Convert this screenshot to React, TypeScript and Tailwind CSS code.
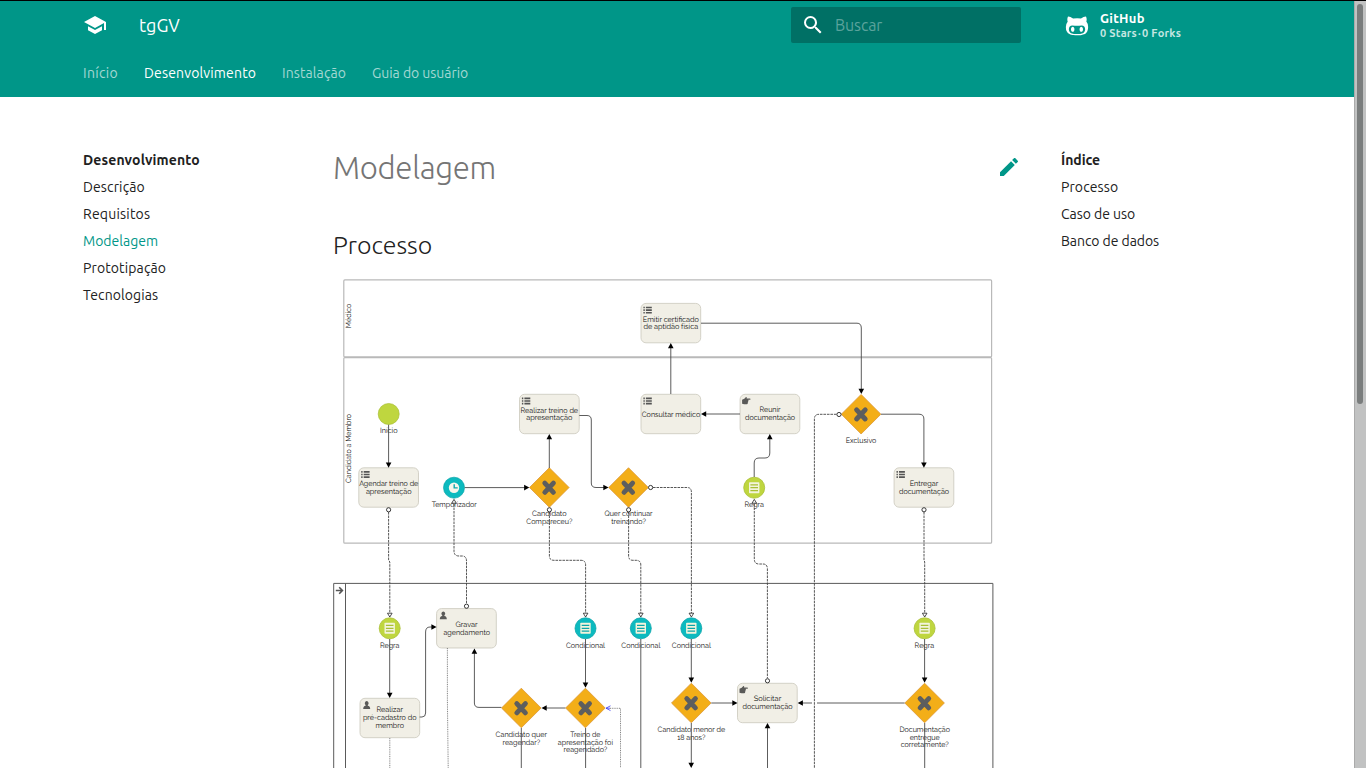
import React from "react";

const tabs = [
  { label: "Início", cls: "w-[35px] tracking-[0.3px] text-[#a4d8d3]" },
  { label: "Desenvolvimento", cls: "w-[112px] tracking-[0.16px] text-white" },
  { label: "Instalação", cls: "w-16 tracking-[0.1px] text-[#a4d8d3]" },
  { label: "Guia do usuário", cls: "w-24 tracking-[-0.04px] text-[#a4d8d3]" },
];

type Kind = "list" | "hand" | "user";
const tasks: [number, number, Kind][] = [
  [641, 303.4, "list"], [641, 394.3, "list"], [519.5, 394.3, "list"], [740.1, 394.3, "hand"],
  [358.8, 467.8, "list"], [894.1, 467.8, "list"], [436.6, 608.6, "user"], [360, 698.3, "user"], [737.5, 683.3, "hand"],
];
const gateways = [[549.3, 487.5], [628.5, 487.5], [861.1, 414.2], [521.3, 708], [585.4, 708], [691.3, 703], [924.6, 703]];
const rules: [number, number, string, string][] = [
  [754.2, 487.7, "#bfd63f", "#a9bf35"], [389.7, 628.3, "#bfd63f", "#a9bf35"], [924.6, 628.3, "#bfd63f", "#a9bf35"],
  [585.5, 628.3, "#0cbabf", "#0aa5a9"], [640.8, 628.3, "#0cbabf", "#0aa5a9"], [691.3, 628.3, "#0cbabf", "#0aa5a9"],
];
const labels: [number, number, number, string][] = [
  [670.8, 321.3, 55.5, "Emitir certificado"], [670.8, 329, 54, "de aptidão física"],
  [671, 416.3, 58, "Consultar médico"],
  [549.3, 412.3, 57, "Realizar treino de"], [549.3, 420, 45.5, "apresentação"],
  [770, 412.2, 20.5, "Reunir"], [770, 420, 49.5, "documentação"],
  [388.7, 432.7, 17, "Início"],
  [388.7, 485.9, 58.5, "Agendar treino de"], [388.7, 493.4, 45, "apresentação"],
  [454.2, 506.7, 44.5, "Temporizador"],
  [549.3, 516, 34, "Candidato"], [549.3, 523.6, 45.5, "Compareceu?"],
  [628.5, 516, 47.5, "Quer continuar"], [628.5, 523.6, 34, "treinando?"],
  [754.2, 506.7, 19, "Regra"], [861, 442.5, 30, "Exclusivo"],
  [924, 485.9, 28, "Entregar"], [924, 493.4, 49.5, "documentação"],
  [466.5, 626.4, 21.5, "Gravar"], [466.7, 634.3, 46, "agendamento"],
  [389.7, 647.3, 19, "Regra"], [585.5, 647.3, 38.5, "Condicional"], [640.8, 647.3, 38.5, "Condicional"],
  [691.3, 647.3, 38.5, "Condicional"], [924.4, 647.3, 19, "Regra"],
  [389.7, 712, 26, "Realizar"], [389.7, 719.8, 53, "pré-cadastro do"], [389.7, 727.4, 28, "membro"],
  [521.3, 736.6, 51, "Candidato quer"], [521.3, 744.3, 37, "reagendar?"],
  [585.4, 736.6, 29.5, "Treino de"], [585.4, 744.3, 54.5, "apresentação foi"], [585.4, 752, 43, "reagendado?"],
  [691.3, 731.7, 67, "Candidato menor de"], [691.3, 739.4, 27.5, "18 anos?"],
  [767.5, 701.2, 27, "Solicitar"], [767.5, 708.8, 49.5, "documentação"],
  [924.7, 731.7, 50, "Documentação"], [924.7, 739.4, 29.5, "entregue"], [924.7, 747, 47.5, "corretamente?"],
];
const solid = [
  "M388.6 424.7V463", "M464.7 487.6H525", "M549.3 468V439", "M579.3 415.5H587Q591.3 415.5 591.3 420V483Q591.3 487.5 596 487.5H604",
  "M670.8 394V348", "M740 414H706", "M701 323.2H857Q861.3 323.2 861.3 328V389", "M754.2 477V463Q754.2 458 759 458H765Q769.8 458 769.8 453V439",
  "M881 414.2H919Q923.9 414.2 923.9 419V463", "M389.7 639V694", "M419.6 717H422Q425.6 717 425.6 713V632Q425.6 627 430 627H432",
  "M501.3 707.4H479Q474.4 707.4 474.4 703V653", "M585.5 639V683", "M565.4 708H546", "M691.3 639V678", "M711.3 703H733",
  "M924.6 639V678", "M904.6 703H817M812 703H802", "M767.5 768V727", "M521.3 728V768", "M585.6 728V768", "M640.8 639V768", "M691.3 723V764", "M924.7 723V768",
];
const dashed = [
  "M388.6 512V560L389.8 562V613", "M454 504V551Q454 556 459 556H462Q466.5 556 466.5 561V604", "M549.4 512V556Q549.4 560.3 554 560.3H581Q585.6 560.3 585.6 565V613",
  "M628.6 512V556Q628.6 560.3 633 560.3H636Q640.8 560.3 640.8 565V613", "M653 487.5H687Q691.4 487.5 691.4 492V613",
  "M754.3 504V559Q754.3 564 759 564H763Q767.4 564 767.4 569V678", "M836.5 414.3H819Q814.4 414.3 814.4 419V768", "M924 512V560L924.7 562V613",
];
const arrows: [number, number, number][] = [
  [388.6, 467.7, 0], [529.3, 487.6, -90], [549.3, 434, 180], [608.5, 487.5, -90], [670.8, 343, 180], [701, 414, 90], [861.3, 394, 0],
  [769.8, 434, 180], [923.9, 467.7, 0], [389.7, 698, 0], [436.6, 627, -90], [474.4, 648.5, 180], [585.5, 687.8, 0], [541.5, 708, 90],
  [691.3, 682.8, 0], [737.5, 703, -90], [924.6, 682.8, 0], [797.7, 703, 90], [767.5, 723, 180], [691.2, 768, 0],
];
const openArrows: [number, number, number][] = [
  [389.8, 617.4, 0], [585.6, 617.4, 0], [640.8, 617.4, 0], [691.4, 617.4, 0], [924.7, 617.4, 0], [454, 499, 180], [754.3, 499, 180],
];
const dots = [[388.6, 509.8], [466.5, 606.2], [549.4, 509.8], [628.6, 509.8], [650.6, 487.5], [767.5, 680.8], [839, 414.5], [924, 509.8]];

function TaskIcon({ kind }: { kind: Kind }) {
  if (kind === "list")
    return <path d="M2.4 4.1H3.8M4.9 4.1H10.8M2.4 6.7H3.8M4.9 6.7H10.8M2.4 9.3H3.8M4.9 9.3H10.8" stroke="#555" strokeWidth="1.6" />;
  if (kind === "hand")
    return <path d="M2 5.4 4.2 4.4 5.9 2.7Q7 2.6 6.6 4.1H10Q11 4.7 10 5.5H8.2Q8.8 6.3 8 6.9Q8.4 7.7 7.7 8.1Q7.9 9.9 6.5 10H4L2 9.4Z" fill="#5a5a58" />;
  return <path d="M6.7 2.8A2.2 2.2 0 0 1 7.8 6.7V7.5Q10.2 7.8 10.2 10.7H3.2Q3.2 7.8 5.6 7.5V6.7A2.2 2.2 0 0 1 6.7 2.8Z" fill="#5a5a58" />;
}

function Diagram() {
  return (
    <svg viewBox="333 279 661 489" width="661" height="489" className="block" fontFamily="Raleway, Lato, sans-serif">
      <g fill="none" stroke="#b9b9b9" strokeWidth="1.2">
        <rect x="343.8" y="279.9" width="647.8" height="77" rx="1" />
        <rect x="343.8" y="357.6" width="647.8" height="185.6" rx="1" />
      </g>
      <g fill="none" stroke="#5a5a5a" strokeWidth="1">
        <path d="M333.7 768V583.4H992.9V768M345.5 583.4V768" />
      </g>
      <path d="M335.8 590.5H342M339.2 587.3 342.4 590.5 339.2 593.7" fill="none" stroke="#555" strokeWidth="1.6" />
      {tasks.map(([x, y, kind], i) => (
        <g key={i} transform={`translate(${x} ${y})`}>
          <rect width="59.7" height="39.4" rx="5" fill="#f1efe6" stroke="#cfcdc2" strokeWidth="0.9" />
          <TaskIcon kind={kind} />
        </g>
      ))}
      {gateways.map(([x, y], i) => (
        <g key={i} transform={`translate(${x} ${y})`}>
          <path d="M0-19.8 19.8 0 0 19.8-19.8 0Z" fill="#f3ae18" stroke="#d8902e" strokeWidth="0.7" />
          <path d="M-4.5-4.4 4.1 4.8M4.1-4.4-4.5 4.8" stroke="#5d5e5e" strokeWidth="4.9" strokeLinecap="round" />
        </g>
      ))}
      <circle cx="388.7" cy="414" r="10.5" fill="#bfd63f" stroke="#a9bf35" strokeWidth="0.7" />
      <circle cx="454" cy="487.7" r="10.5" fill="#0cbabf" stroke="#0aa5a9" strokeWidth="0.7" />
      <circle cx="454" cy="487.7" r="5.2" fill="#f7f6ec" />
      <path d="M454.2 484.2V487.9H457.7" fill="none" stroke="#0ba8ad" strokeWidth="1.4" />
      {rules.map(([x, y, fill, edge], i) => (
        <g key={i} transform={`translate(${x} ${y})`}>
          <circle r="10.5" fill={fill} stroke={edge} strokeWidth="0.8" />
          <rect x="-5.2" y="-5.5" width="10.4" height="11" rx="0.8" fill="#f3f4dc" />
          <path d="M-3.8-2.9H3.8M-3.8 0H3.8M-3.8 2.9H3.8" stroke={edge} strokeWidth="1.2" />
        </g>
      ))}
      <g fill="#101010" fontSize="7.6" textAnchor="middle" textRendering="geometricPrecision">
        {labels.map(([x, y, w, s], i) => (
          <text key={i} x={x} y={y + 0.2} textLength={w + 0.6} lengthAdjust="spacingAndGlyphs">{s}</text>
        ))}
        <text transform="translate(350.6 316) rotate(-90)" textLength="24.5" lengthAdjust="spacingAndGlyphs">Médico</text>
        <text transform="translate(350.6 448.5) rotate(-90)" textLength="69" lengthAdjust="spacingAndGlyphs">Candidato a Membro</text>
      </g>
      <g fill="none" stroke="#4a4a4a" strokeWidth="0.9">
        {solid.map((d) => <path key={d} d={d} />)}
      </g>
      <g fill="none" stroke="#444" strokeWidth="0.9" strokeDasharray="2.6 0.9">
        {dashed.map((d) => <path key={d} d={d} />)}
      </g>
      <g fill="none" stroke="#666" strokeWidth="0.8" strokeDasharray="1 0.8">
        <path d="M447.4 648V700L448.2 768M389.8 738V768M610 708.3H620.5V768" />
      </g>
      <path d="M610.5 705.8 606 708.2 610.5 710.6M606 708.2H610" fill="none" stroke="#3d3df0" strokeWidth="0.8" />
      {arrows.map(([x, y, r], i) => <path key={i} transform={`translate(${x} ${y}) rotate(${r})`} d="M0 0-2.8-5.2H2.8Z" fill="#000" />)}
      {openArrows.map(([x, y, r], i) => (
        <path key={i} transform={`translate(${x} ${y}) rotate(${r})`} d="M0-.4-2.3-4.2H2.3Z" fill="#fff" stroke="#222" strokeWidth="0.8" />
      ))}
      {dots.map(([x, y], i) => <circle key={i} cx={x} cy={y} r="2.1" fill="#fff" stroke="#222" strokeWidth="0.9" />)}
    </svg>
  );
}

function NavColumn({ title, titleCls, items }: { title: string; titleCls: string; items: { t: string; cls: string }[] }) {
  return (
    <nav className="flex flex-col gap-[9px] text-[14px] leading-[18px] text-[#212121]">
      <span className={"font-bold " + titleCls}>{title}</span>
      {items.map((i) => (
        <a key={i.t} className={i.cls}>{i.t}</a>
      ))}
    </nav>
  );
}

export default function App() {
  return (
    <div className="flex h-[768px] w-[1366px] flex-col overflow-hidden bg-white font-['Ubuntu','Noto_Sans',sans-serif]">
      <div className="h-px shrink-0 bg-black" />
      <div className="flex min-h-0 flex-1">
        <div className="flex min-w-0 flex-1 flex-col">
          <header className="h-24 shrink-0 bg-[#009688] pl-[83px] text-white">
            <div className="flex h-12 items-center whitespace-nowrap">
              <svg viewBox="0 0 24 24" className="size-6 shrink-0 fill-white"><path d="M5 13.18v4L12 21l7-3.82v-4L12 17l-7-3.82zM12 3 1 9l11 6 9-4.91V17h2V9L12 3z" /></svg>
              <span className="ml-8 w-[652px] text-[18px] leading-[26px]">tgGV</span>
              <div className="flex h-9 w-[230px] items-center rounded-xs bg-[#007065] pl-[10px]">
                <svg viewBox="0 0 24 24" className="size-6 shrink-0 fill-white"><path d="M9.5 3A6.5 6.5 0 0 1 16 9.5c0 1.61-.59 3.09-1.56 4.23l.27.27h.79l5 5-1.5 1.5-5-5v-.79l-.27-.27A6.516 6.516 0 0 1 9.5 16 6.5 6.5 0 0 1 3 9.5 6.5 6.5 0 0 1 9.5 3m0 2C7 5 5 7 5 9.5S7 14 9.5 14 14 12 14 9.5 12 5 9.5 5z" /></svg>
                <span className="ml-[10px] text-[16px] leading-6 tracking-[-0.1px] text-[#5ba39c]">Buscar</span>
              </div>
              <svg viewBox="0 0 416 448" className="ml-[44px] size-6 shrink-0 fill-white"><path d="M160 304q0 10-3.125 20.5t-10.75 19T128 352t-18.125-8.5-10.75-19T96 304t3.125-20.5 10.75-19T128 256t18.125 8.5 10.75 19T160 304zm160 0q0 10-3.125 20.5t-10.75 19T288 352t-18.125-8.5-10.75-19T256 304t3.125-20.5 10.75-19T288 256t18.125 8.5 10.75 19T320 304zm40 0q0-30-17.25-51T296 232q-10.25 0-48.75 5.25Q229.5 240 208 240t-39.25-2.75Q130.75 232 120 232q-29.5 0-46.75 21T56 304q0 22 8 38.375t20.25 25.75 30.5 15 35 7.375 37.25 1.75h42q20.5 0 37.25-1.75t35-7.375 30.5-15 20.25-25.75T360 304zm56-44q0 51.75-15.25 82.75-9.5 19.25-26.375 33.25t-35.25 21.5-42.5 11.875-42.875 5.5T212 416q-19.5 0-35.5-.75t-36.875-3.125-38.125-7.5-34.25-12.875T37 371.5t-21.5-28.75Q0 312 0 260q0-59.25 34-99-6.75-20.5-6.75-42.5 0-29 12.75-54.5 27 0 47.5 9.875t47.25 30.875Q171.5 96 212 96q37 0 70 8 26.25-20.5 46.75-30.25T376 64q12.75 25.5 12.75 54.5 0 21.75-6.75 42 34 40 34 99.5z" /></svg>
              <div className="ml-[11px] flex flex-col pt-px font-bold">
                <span className="text-[13px] leading-[15px] tracking-[0.3px]">GitHub</span>
                <span className="text-[11px] leading-[15px] tracking-[0.25px] text-[#c5e6e2]">0 Stars<span className="mx-px">·</span>0 Forks</span>
              </div>
            </div>
            <div className="flex h-12 items-center gap-[26px] text-[14px] leading-[18px] whitespace-nowrap">
              {tabs.map((t) => (
                <a key={t.label} className={t.cls}>{t.label}</a>
              ))}
            </div>
          </header>
          <main className="flex min-h-0 flex-1 pl-[83px]">
            <aside className="w-[250px] shrink-0 pt-[54px]">
              <NavColumn title="Desenvolvimento" titleCls="tracking-[0.13px]" items={[
                { t: "Descrição", cls: "tracking-[0.12px]" }, { t: "Requisitos", cls: "tracking-[0.2px]" }, { t: "Modelagem", cls: "text-[#009688]" },
                { t: "Prototipação", cls: "tracking-[0.12px]" }, { t: "Tecnologias", cls: "tracking-[0.1px]" },
              ]} />
            </aside>
            <article className="w-[728px] shrink-0 pt-[50px]">
              <div className="flex h-10 w-[688px] justify-between">
                <h1 className="pt-px text-[31.25px] leading-10 font-light tracking-[-0.01em] text-[#757575]">Modelagem</h1>
                <svg viewBox="0 0 24 24" className="mt-2 size-6 fill-[#009688]"><path d="M20.71 7.04c.39-.39.39-1.04 0-1.41l-2.34-2.34c-.37-.39-1.02-.39-1.41 0l-1.84 1.83 3.75 3.75M3 17.25V21h3.75L17.81 9.93l-3.75-3.75L3 17.25z" /></svg>
              </div>
              <div className="h-[92px] pt-[42px]">
                <h2 className="text-[25px] leading-8 font-light tracking-[-0.05px] text-[#212121]">Processo</h2>
              </div>
              <Diagram />
            </article>
            <aside className="pt-[54px]">
              <NavColumn title="Índice" titleCls="tracking-[-0.05px]" items={[
                { t: "Processo", cls: "tracking-[0.1px]" }, { t: "Caso de uso", cls: "tracking-[-0.05px]" }, { t: "Banco de dados", cls: "tracking-[-0.06px]" },
              ]} />
            </aside>
          </main>
        </div>
        <div className="w-3 shrink-0 border-l border-[#aaaaaa] bg-[#c1c2c2] pt-[3px] pl-[2px]">
          <div className="h-[400px] w-[6px] rounded-full bg-[#7a7d7d]" />
        </div>
      </div>
    </div>
  );
}
